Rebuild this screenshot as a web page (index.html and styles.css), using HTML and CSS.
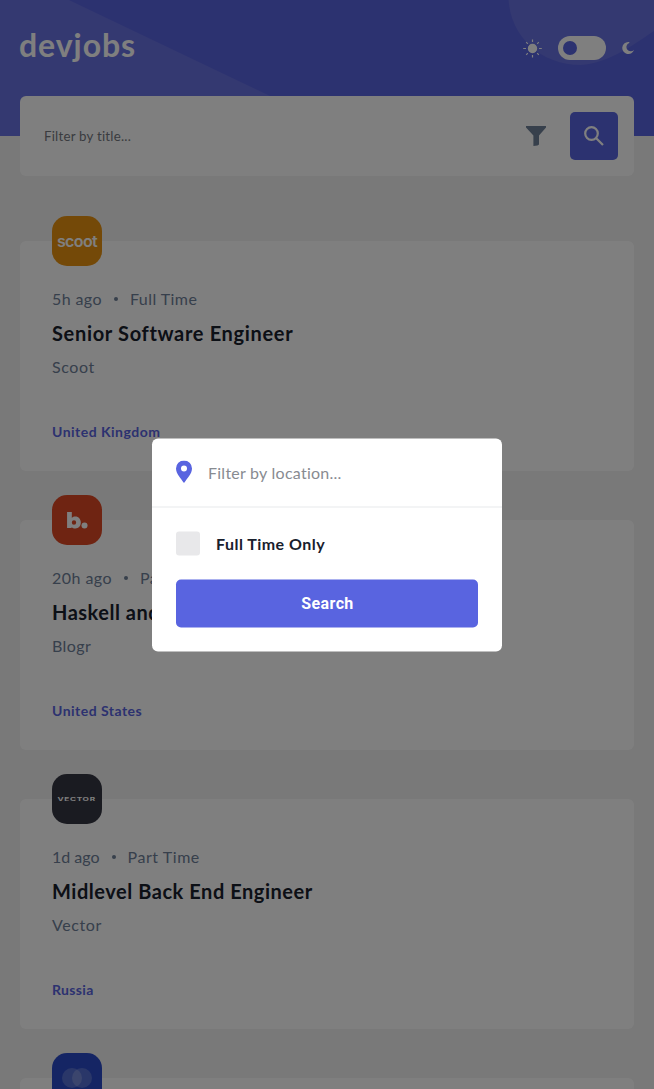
FILE: index.html
```html
<!DOCTYPE html>
<html lang="en">
<head>
<meta charset="utf-8">
<title>devjobs</title>
<link rel="stylesheet" href="styles.css">
</head>
<body>
<div class="page">
  <header class="header">
    <svg class="pattern" viewBox="0 0 654 136" width="654" height="136" aria-hidden="true">
      <path d="M0 0H69L354 136H0Z"/>
      <path d="M508.500 0C511 37 541 65 581 65C610 63 636 43 654 31V0Z"/>
    </svg>
    <div class="brand">devjobs</div>
    <div class="theme">
      <svg class="sun" width="19" height="19" viewBox="0 0 19 19"><circle cx="9.5" cy="9.5" r="4.1"/><path d="M9.5 .4V3M9.5 16V18.6M.2 9.5H3M16 9.5H18.8M3.2 3.2L4.8 4.8M14.2 14.2L15.8 15.8M3.2 15.8L4.8 14.2M14.2 4.8L15.8 3.2"/></svg>
      <div class="toggle"><span class="knob"></span></div>
      <svg class="moon" width="12" height="12" viewBox="0 0 12 12"><path d="M6.3 0A6 6 0 1 0 12 7.7A4.3 4.3 0 1 1 7.2 .9C7.6 .5 7.6 .1 6.3 0Z"/></svg>
    </div>
  </header>
  <main class="main">
    <div class="searchbar">
      <span class="title-filter">Filter by title...</span>
      <svg class="funnel" width="20" height="20" viewBox="0 0 20 20"><path d="M0 0H20V1.5L13 9.5V18.5L11.5 19.5L7.4 20V9.5L0 1.5Z"/></svg>
      <button class="go" aria-label="Search"><svg width="20" height="20" viewBox="0 0 20 20"><circle cx="7.5" cy="7.5" r="6.3"/><path d="M12 12L19 19"/></svg></button>
    </div>
    <section class="jobs">
      <article class="card">
        <div class="logo scoot"><span>scoot</span></div>
        <p class="meta"><span class="a1">5h ago</span><i class="dot"></i><span>Full Time</span></p>
        <h2 class="job">Senior Software Engineer</h2>
        <p class="company">Scoot</p>
        <p class="place">United Kingdom</p>
      </article>
      <article class="card">
        <div class="logo blogr"><svg width="21" height="18" viewBox="0 0 22 19"><path fill-rule="evenodd" d="M0 0H5V6.3C6 5.3 7.2 4.8 8.7 4.8C12.2 4.8 14.5 7.6 14.5 11.2C14.5 15 12.1 17.5 8.8 17.5C7.1 17.5 5.8 17 4.8 15.9V17H0ZM7.3 8.8A2.3 2.3 0 1 0 7.3 13.4A2.3 2.3 0 1 0 7.3 8.8Z"/><circle cx="18.4" cy="14.2" r="3.2"/></svg></div>
        <p class="meta"><span>20h ago</span><i class="dot"></i><span>Part Time</span></p>
        <h2 class="job j2">Haskell and PureScript Dev</h2>
        <p class="company c2">Blogr</p>
        <p class="place">United States</p>
      </article>
      <article class="card">
        <div class="logo vector"><span>VECTOR</span></div>
        <p class="meta"><span class="a3">1d ago</span><i class="dot"></i><span class="t3">Part Time</span></p>
        <h2 class="job j3">Midlevel Back End Engineer</h2>
        <p class="company">Vector</p>
        <p class="place p3">Russia</p>
      </article>
      <article class="card">
        <div class="logo office"><svg width="30" height="20" viewBox="0 0 30 20"><circle cx="10" cy="10" r="10"/><circle cx="20" cy="10" r="10"/></svg></div>
      </article>
    </section>
  </main>
</div>
<div class="overlay">
  <div class="modal">
    <div class="location">
      <svg width="16" height="23" viewBox="0 0 16 23"><path fill-rule="evenodd" d="M8 0A8 8 0 0 1 16 8C16 13 11.5 17.5 8 22.6C4.5 17.5 0 13 0 8A8 8 0 0 1 8 0ZM8 5A3 3 0 1 0 8 11A3 3 0 1 0 8 5Z"/></svg>
      <span class="loc-text">Filter by location...</span>
    </div>
    <div class="options">
      <label class="check"><span class="box"></span><span>Full Time Only</span></label>
      <button class="submit">Search</button>
    </div>
  </div>
</div>
</body>
</html>
```
FILE: styles.css
```css
* { box-sizing: border-box; margin: 0; }
body { background: #f2f2f2; font-family: Lato, sans-serif; font-size: 16px; color: #6e8098; font-variant-ligatures: none; }
.page { height: 1089px; overflow: hidden; }
.header { position: relative; height: 136px; padding: 28px 20px 0 19px; background: #5964e0; display: flex; justify-content: space-between; align-items: flex-start; }
.pattern { position: absolute; top: 0; left: 0; fill: #fff; fill-opacity: .09; }
.brand { position: relative; color: #fff; font-weight: 700; font-size: 32px; line-height: 34px; letter-spacing: .95px; }
.theme { position: relative; display: flex; align-items: center; height: 40px; }
.sun { fill: #fff; stroke: #fff; stroke-width: 1.2; }
.toggle { width: 48px; height: 24px; margin: 0 16px; padding: 5px; border-radius: 12px; background: #fff; }
.knob { display: block; width: 14px; height: 14px; border-radius: 50%; background: #5964e0; }
.moon { fill: #fff; }
.main { padding: 0 20px; margin-top: -40px; position: relative; }
.searchbar { height: 80px; border-radius: 6px; background: #fff; padding: 0 16px 0 24px; display: flex; align-items: center; }
.title-filter { flex: 1; font-size: 13.3px; letter-spacing: .22px; color: #75787e; }
.funnel { fill: #6e8098; }
.go { width: 48px; height: 48px; margin-left: 24px; border: 0; border-radius: 5px; background: #5964e0; display: grid; place-items: center; padding: 0; }
.go svg { fill: none; stroke: #fff; stroke-width: 2.2; }
.jobs { display: grid; gap: 49px; padding-top: 65px; }
.card { height: 230px; border-radius: 6px; background: #fff; padding: 0 32px; }
.logo { width: 50px; height: 50px; margin-top: -25px; border-radius: 15px; display: grid; place-items: center; color: #fff; }
.scoot { background: #e99210; font: 600 16px/20px Inter, sans-serif; letter-spacing: -.6px; }
.blogr { background: #df4925; }
.blogr svg { fill: #fff; margin-top: 2px; }
.vector { background: #353642; font: 700 5px/8px Inter, sans-serif; letter-spacing: .4px; }
.vector span { transform: scaleX(1.65); }
.office { background: #2b4bc8; }
.office svg { fill: #fff; fill-opacity: .2; }
.meta { display: flex; align-items: center; line-height: 20px; margin-top: 23px; letter-spacing: .45px; }
.a1 { letter-spacing: .4px; }
.a3 { letter-spacing: 0; }
.t3 { letter-spacing: .55px; }
.dot { width: 4px; height: 4px; border-radius: 50%; background: #6e8098; margin: 0 12px; }
.job { font-size: 20px; line-height: 24px; font-weight: 700; color: #19202d; margin-top: 12px; letter-spacing: .67px; }
.j2 { letter-spacing: .5px; }
.j3 { letter-spacing: .54px; }
.company { line-height: 20px; margin-top: 12px; letter-spacing: .6px; }
.c2 { letter-spacing: .4px; }
.place { font-size: 14px; line-height: 18px; font-weight: 700; color: #5964e0; margin-top: 46px; letter-spacing: .48px; }
.p3 { letter-spacing: .35px; }
.overlay { position: fixed; inset: 0; background: rgba(0,0,0,.5); }
.modal { position: absolute; top: 50%; left: 50%; width: 350px; height: 213px; transform: translate(-50%, -50%); border-radius: 6px; background: #fff; }
.location { height: 69px; padding: 0 24px; display: flex; align-items: center; gap: 16px; border-bottom: 1px solid #e8eaec; }
.location svg { fill: #5964e0; }
.loc-text { color: #888b91; letter-spacing: .25px; }
.options { padding: 24px; display: grid; gap: 24px; }
.check { display: flex; align-items: center; gap: 16px; height: 24px; font-weight: 700; color: #19202d; letter-spacing: .47px; }
.box { width: 24px; height: 24px; border-radius: 3px; background: #e8e8ea; }
.submit { height: 48px; border: 0; border-radius: 5px; background: #5964e0; color: #fff; font: 700 16px Roboto, sans-serif; letter-spacing: .4px; padding: 0 5px 0 6px; }
```
